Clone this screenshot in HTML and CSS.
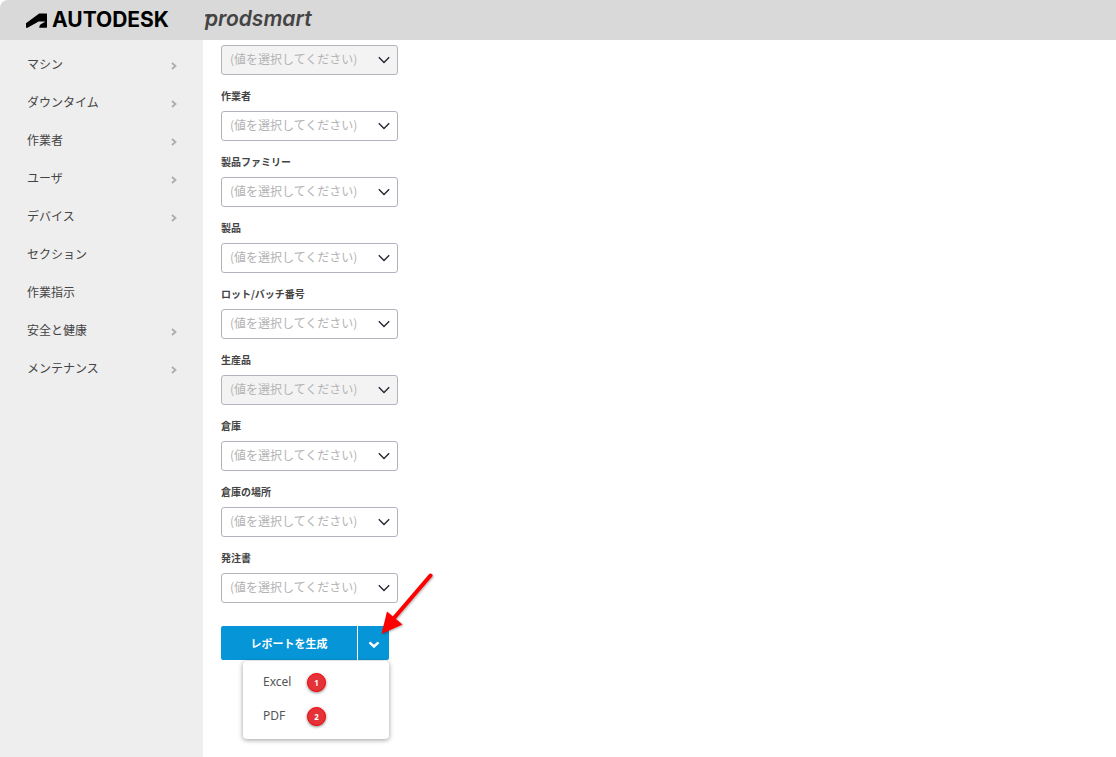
FILE: index.html
```html
<!DOCTYPE html>
<html lang="ja">
<head>
<meta charset="utf-8">
<meta name="viewport" content="width=device-width, initial-scale=1">
<title>Autodesk Prodsmart</title>
<link rel="stylesheet" href="styles.css">
</head>
<body>
<svg class="defs" width="0" height="0" aria-hidden="true">
  <symbol id="right" viewBox="0 0 6 8"><path d="M1 1l3.500 3L1 7" fill="none" stroke="currentColor" stroke-width="1.700"/></symbol>
  <symbol id="down" viewBox="0 0 12 8"><path d="M.8 1.200L6 6.500l5.200-5.300" fill="none" stroke="currentColor" stroke-width="1.300"/></symbol>
</svg>
<header class="topbar">
  <div class="brand">
    <svg class="brand-mark" viewBox="0 0 21 15" aria-hidden="true"><path d="M0 14.700V10.300L13.200.500H20.600a.4.400 0 0 1 .4.400v13.400a.4.400 0 0 1-.4.400H13.300c0-2.100 1-3.200 2.700-4.100l2.800-1.600V8.500H12.700L1.500 14.700z"/></svg>
    <span class="brand-name">AUTODESK</span>
  </div>
  <div class="product">prodsmart<svg class="product-bar" viewBox="0 0 8 3" aria-hidden="true"><path d="M.4.200H8L7.500 2.500H0z" fill="currentColor"/></svg></div>
</header>
<div class="layout">
  <nav class="sidebar">
    <a class="nav-item" href="#">マシン<svg class="nav-chevron"><use href="#right"/></svg></a>
    <a class="nav-item" href="#">ダウンタイム<svg class="nav-chevron"><use href="#right"/></svg></a>
    <a class="nav-item" href="#">作業者<svg class="nav-chevron"><use href="#right"/></svg></a>
    <a class="nav-item" href="#">ユーザ<svg class="nav-chevron"><use href="#right"/></svg></a>
    <a class="nav-item" href="#">デバイス<svg class="nav-chevron"><use href="#right"/></svg></a>
    <a class="nav-item" href="#">セクション</a>
    <a class="nav-item" href="#">作業指示</a>
    <a class="nav-item" href="#">安全と健康<svg class="nav-chevron"><use href="#right"/></svg></a>
    <a class="nav-item" href="#">メンテナンス<svg class="nav-chevron"><use href="#right"/></svg></a>
  </nav>
  <main class="content">
    <form class="filters">
      <div class="field">
        <div class="select"><select disabled aria-label="フィルター"><option>(値を選択してください)</option></select><svg class="select-chevron"><use href="#down"/></svg></div>
      </div>
      <div class="field">
        <label class="label" for="operator">作業者</label>
        <div class="select"><select id="operator"><option>(値を選択してください)</option></select><svg class="select-chevron"><use href="#down"/></svg></div>
      </div>
      <div class="field">
        <label class="label" for="family">製品ファミリー</label>
        <div class="select"><select id="family"><option>(値を選択してください)</option></select><svg class="select-chevron"><use href="#down"/></svg></div>
      </div>
      <div class="field">
        <label class="label" for="product">製品</label>
        <div class="select"><select id="product"><option>(値を選択してください)</option></select><svg class="select-chevron"><use href="#down"/></svg></div>
      </div>
      <div class="field">
        <label class="label" for="lot">ロット/バッチ番号</label>
        <div class="select"><select id="lot"><option>(値を選択してください)</option></select><svg class="select-chevron"><use href="#down"/></svg></div>
      </div>
      <div class="field">
        <label class="label" for="produced">生産品</label>
        <div class="select"><select id="produced" disabled><option>(値を選択してください)</option></select><svg class="select-chevron"><use href="#down"/></svg></div>
      </div>
      <div class="field">
        <label class="label" for="warehouse">倉庫</label>
        <div class="select"><select id="warehouse"><option>(値を選択してください)</option></select><svg class="select-chevron"><use href="#down"/></svg></div>
      </div>
      <div class="field">
        <label class="label" for="location">倉庫の場所</label>
        <div class="select"><select id="location"><option>(値を選択してください)</option></select><svg class="select-chevron"><use href="#down"/></svg></div>
      </div>
      <div class="field">
        <label class="label" for="order">発注書</label>
        <div class="select"><select id="order"><option>(値を選択してください)</option></select><svg class="select-chevron"><use href="#down"/></svg></div>
      </div>
      <div class="actions">
        <button class="generate" type="button">レポートを生成</button>
        <button class="toggle" type="button" aria-label="形式を選択"><svg class="toggle-icon" viewBox="0 0 12 8"><path d="M1.500 1.300L6 5.500l4.500-4.200" fill="none" stroke="#fff" stroke-width="2.400"/></svg></button>
        <div class="menu">
          <button class="menu-item" type="button"><span class="format">Excel</span><span class="badge">1</span></button>
          <button class="menu-item" type="button"><span class="format">PDF</span><span class="badge">2</span></button>
        </div>
        <svg class="pointer" viewBox="0 0 60 70" aria-hidden="true"><path d="M49.500 7.500L13 50" stroke="#f00" stroke-width="4" stroke-linecap="round"/><path d="M.5 66L6 43.500l15.500 13z" fill="#f00"/></svg>
      </div>
    </form>
  </main>
</div>
</body>
</html>
```

FILE: styles.css
```css
* { box-sizing: border-box; }
body {
  margin: 0;
  min-height: 100vh;
  display: flex;
  flex-direction: column;
  background: #fff;
  color: #444;
  font: 12px/16px "Noto Sans CJK JP", sans-serif;
}
button, select { font: inherit; }
.defs { position: absolute; }
.topbar {
  display: flex;
  align-items: center;
  gap: 36px;
  height: 40px;
  padding: 0 26px;
  background: #d9d9d9;
  border-top-left-radius: 8px;
}
.brand { display: flex; align-items: center; gap: 5px; }
.brand-mark { width: 21px; height: 15px; }
.brand-name {
  font: 700 21px/24px Inter, sans-serif;
  color: #000;
}
.product {
  position: relative;
  padding-bottom: 2px;
  color: #444;
  font: italic 600 21px/24px Inter, sans-serif;
}
.product-bar { position: absolute; left: 0; top: 7px; width: 8px; height: 3px; }
.layout { flex: 1; display: flex; }
.sidebar {
  flex: none;
  width: 203px;
  padding-top: 5px;
  background: #eee;
}
.nav-item {
  display: flex;
  align-items: center;
  justify-content: space-between;
  height: 38px;
  padding: 0 26px 0 27px;
  color: #444;
  text-decoration: none;
}
.nav-chevron { width: 6px; height: 8px; margin-top: 4px; color: #aaa; }
.content { flex: 1; padding: 5px 18px; }
.filters { width: 177px; }
.field { margin-bottom: 12px; }
.label {
  display: block;
  height: 24px;
  font-size: 10px;
  font-weight: 700;
  line-height: 18px;
  color: #444;
}
.select { position: relative; height: 30px; }
.select select {
  width: 100%;
  height: 100%;
  padding: 0 30px 3px 8px;
  appearance: none;
  border: 1px solid #b3b3bd;
  border-radius: 3px;
  background: #fff;
  color: #b3b3b3;
  opacity: 1;
}
.select select:disabled { background: #f3f3f3; }
.select-chevron {
  position: absolute;
  right: 8px;
  top: 11px;
  width: 12px;
  height: 8px;
  color: #223;
  pointer-events: none;
}
.actions {
  position: relative;
  display: flex;
  gap: 1px;
  width: 168px;
  height: 34px;
  margin-top: 23px;
}
.generate, .toggle {
  padding: 0;
  border: 0;
  background: #0696d7;
  color: #fff;
  font-size: 11px;
  font-weight: 700;
}
.generate { flex: 1; border-radius: 2px 0 0 2px; }
.toggle { width: 31px; border-radius: 0 2px 2px 0; }
.toggle-icon { width: 12px; height: 8px; vertical-align: middle; }
.menu {
  position: absolute;
  top: 35px;
  right: 0;
  width: 146px;
  padding: 4px 0 6px;
  border-radius: 4px;
  background: #fff;
  box-shadow: 0 1px 5px rgba(0, 0, 0, .4);
}
.menu-item {
  display: flex;
  align-items: center;
  width: 100%;
  height: 34px;
  padding: 0 20px;
  border: 0;
  background: none;
  color: #555;
  font-family: "Noto Sans", sans-serif;
  text-align: left;
}
.format { width: 44px; }
.badge {
  width: 19px;
  height: 19px;
  border: 1px solid #f00;
  border-radius: 50%;
  background: #e33338;
  box-shadow: 0 1px 3px rgba(0, 0, 0, .5);
  color: #fff;
  font: 700 8px/17px "Noto Sans", sans-serif;
  text-align: center;
}
.pointer {
  position: absolute;
  left: 160px;
  top: -58px;
  width: 60px;
  height: 70px;
  filter: drop-shadow(1px 1px 1px rgba(0, 0, 0, .3));
  pointer-events: none;
}
```
